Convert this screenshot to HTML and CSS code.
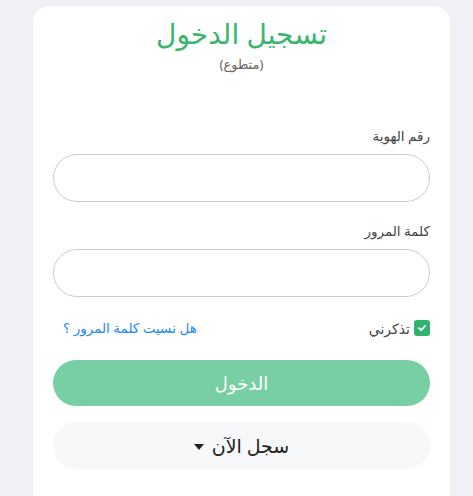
FILE: index.html
```html
<!DOCTYPE html>
<html lang="ar" dir="rtl">
<head>
<meta charset="utf-8">
<link rel="stylesheet" href="styles.css">
</head>
<body>
<div class="card">
  <div class="head">
    <h1 class="title">تسجيل الدخول</h1>
    <div class="sub">(متطوع)</div>
  </div>
  <form class="form">
    <label class="label">رقم الهوية</label>
    <input class="input" type="text">
    <label class="label label2">كلمة المرور</label>
    <input class="input" type="password">
    <div class="row">
      <label class="remember">
        <span class="check"><svg width="10" height="10" viewBox="0 0 10 10"><path d="M2 5.2 L4.2 7.2 L8 3" fill="none" stroke="#fff" stroke-width="1.8" stroke-linecap="round" stroke-linejoin="round"/></svg></span>
        <span>تذكرني</span>
      </label>
      <a class="forgot">هل نسيت كلمة المرور ؟</a>
    </div>
    <button class="btn login" type="button">الدخول</button>
    <button class="btn register" type="button">سجل الآن <span class="caret"></span></button>
  </form>
</div>
</body>
</html>
```
FILE: styles.css
```css
html, body { margin: 0; padding: 0; }
body {
  background: #f0f1f6;
  font-family: "Noto Sans", "DejaVu Sans", sans-serif;
  height: 496px;
  overflow: hidden;
}
.card {
  margin: 6px 23px 0 0;
  width: 417px;
  height: 490px;
  background: #fff;
  border-radius: 16px 16px 0 0;
  box-sizing: border-box;
  padding: 0 20px;
}
.head { text-align: center; padding-top: 10px; }
.title {
  margin: 0;
  font-weight: normal;
  font-size: 28px;
  line-height: 34px;
  color: #38b56e;
}
.sub { font-size: 13px; color: #666; line-height: 18px; margin-top: 5px; }
.form { display: flex; flex-direction: column; margin-top: 54px; }
.label { font-size: 13.5px; color: #444; line-height: 18px; margin-bottom: 9px; }
.label2 { margin-top: 20px; }
.input {
  height: 48px;
  box-sizing: border-box;
  border: 1px solid #ccc;
  border-radius: 24px;
  background: #fff;
  outline: none;
}
.row {
  display: flex;
  justify-content: space-between;
  align-items: center;
  margin-top: 22px;
  height: 18px;
  padding-left: 10px;
}
.remember { display: flex; align-items: center; gap: 4px; font-size: 14px; color: #444; }
.check {
  width: 16px; height: 16px; border-radius: 3px; background: #2fb36d;
  display: flex; align-items: center; justify-content: center;
}
.forgot { font-size: 13.5px; color: #1e88f0; }
.btn {
  height: 46px;
  border: none;
  border-radius: 23px;
  font-family: inherit;
  font-size: 18px;
}
.login { margin-top: 23px; background: #78cfa3; color: #fff; }
.register { margin-top: 16px; height: 47px; background: #f7f8fa; color: #222; font-size: 19px; }
.caret {
  display: inline-block;
  width: 0; height: 0;
  border-left: 5px solid transparent;
  border-right: 5px solid transparent;
  border-top: 6px solid #222;
  vertical-align: middle;
  margin-right: 3px;
}
```
